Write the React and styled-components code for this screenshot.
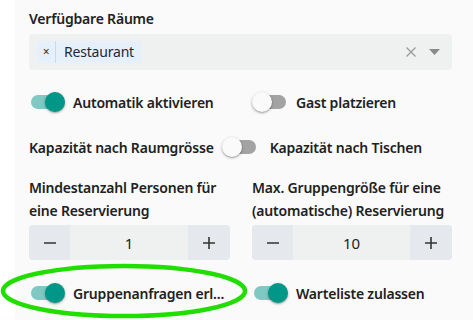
import styled, { createGlobalStyle } from "styled-components";

const Global = createGlobalStyle`
  html, body {
    margin: 0;
    padding: 0;
    background: #ffffff;
  }
  body {
    font-family: "Noto Sans", "Open Sans", sans-serif;
    color: #212121;
    letter-spacing: -0.2px;
  }
`;

const Page = styled.div`
  position: relative;
  width: 473px;
  height: 320px;
  overflow: hidden;
  background: #ffffff;
`;

const Panel = styled.div`
  margin-left: 15px;
  height: 320px;
  background: #fafafa;
  padding: 8px 21px 0 14px;
  box-sizing: border-box;
  display: flex;
  flex-direction: column;
`;

const Label = styled.div`
  font-size: 14px;
  font-weight: 600;
  line-height: 22px;
  margin-bottom: 4px;
`;

const Select = styled.div`
  height: 36px;
  border-radius: 4px;
  background: #eff0f0;
  display: flex;
  align-items: center;
  padding: 0 12px 0 8px;
  box-sizing: border-box;
`;

const Chip = styled.div`
  display: flex;
  align-items: stretch;
  height: 22px;
  background: #e6f0fb;
  border-radius: 2px;
  font-size: 14px;
  line-height: 22px;
  color: #1f2a36;
`;

const ChipRemove = styled.span`
  width: 18px;
  text-align: center;
  font-size: 12px;
  color: #333;
  border-right: 1px solid #c4daf1;
`;

const ChipText = styled.span`
  padding: 0 7px 0 8px;
`;

const SelectIcons = styled.div`
  margin-left: auto;
  display: flex;
  align-items: center;
  gap: 12px;
`;

const Row = styled.div`
  display: grid;
  grid-template-columns: 201px 200px;
  column-gap: 22px;
  margin-top: ${(p) => p.$mt || 0}px;
`;

const ToggleLine = styled.div`
  height: 32px;
  display: flex;
  align-items: center;
  gap: 8px;
  margin-top: ${(p) => p.$mt || 0}px;
  font-size: 14px;
  font-weight: 600;
  white-space: nowrap;
`;

const After = styled.span`
  margin-left: 4px;
`;

const SwitchBox = styled.span`
  position: relative;
  flex: none;
  width: 36px;
  height: 20px;
`;

const Track = styled.span`
  position: absolute;
  left: 2px;
  top: 3px;
  width: 32px;
  height: 14px;
  border-radius: 7px;
  background: ${(p) => (p.$on ? "#7fc9c2" : "#a3a3a3")};
`;

const Thumb = styled.span`
  position: absolute;
  top: 0;
  left: ${(p) => (p.$on ? 16 : 0)}px;
  width: 20px;
  height: 20px;
  border-radius: 50%;
  background: ${(p) => (p.$on ? "#009688" : "#fafafa")};
  box-shadow: 0 1px 3px rgba(0, 0, 0, 0.3), 0 1px 1px rgba(0, 0, 0, 0.14);
`;

const Switch = ({ on }) => (
  <SwitchBox>
    <Track $on={on} />
    <Thumb $on={on} />
  </SwitchBox>
);

const Field = styled.div`
  display: flex;
  flex-direction: column;
`;

const FieldLabel = styled.div`
  font-size: 14px;
  font-weight: 600;
  line-height: 23px;
  margin-bottom: 3px;
`;

const Stepper = styled.div`
  display: grid;
  grid-template-columns: 41px 1fr 42px;
  height: 35px;
  border-radius: 4px;
  overflow: hidden;
  background: #eff0f0;
`;

const StepBtn = styled.div`
  background: #e5e8ec;
  display: flex;
  align-items: center;
  justify-content: center;
`;

const StepValue = styled.div`
  display: flex;
  align-items: center;
  justify-content: center;
  font-size: 15px;
  color: #222;
`;

const Ring = styled.svg`
  position: absolute;
  left: 0;
  top: 262px;
`;

const Minus = () => (
  <svg width="14" height="14" viewBox="0 0 14 14">
    <path d="M1 7h12" stroke="#333" strokeWidth="1.6" />
  </svg>
);

const Plus = () => (
  <svg width="14" height="14" viewBox="0 0 14 14">
    <path d="M1 7h12M7 1v12" stroke="#333" strokeWidth="1.6" />
  </svg>
);

export default function App() {
  return (
    <Page>
      <Global />
      <Panel>
        <Label>Verfügbare Räume</Label>
        <Select>
          <Chip>
            <ChipRemove>×</ChipRemove>
            <ChipText>Restaurant</ChipText>
          </Chip>
          <SelectIcons>
            <svg width="12" height="12" viewBox="0 0 12 12">
              <path d="M1.5 1.5l9 9M10.5 1.5l-9 9" stroke="#9a9a9a" strokeWidth="1.3" />
            </svg>
            <svg width="11" height="6" viewBox="0 0 11 6">
              <path d="M0 0h11L5.5 6z" fill="#8a8a8a" />
            </svg>
          </SelectIcons>
        </Select>

        <Row $mt={16}>
          <ToggleLine>
            <Switch on />
            Automatik aktivieren
          </ToggleLine>
          <ToggleLine>
            <Switch />
            Gast platzieren
          </ToggleLine>
        </Row>

        <ToggleLine $mt={13}>
          Kapazität nach Raumgrösse
          <Switch />
          <After>Kapazität nach Tischen</After>
        </ToggleLine>

        <Row $mt={13}>
          <Field>
            <FieldLabel>
              Mindestanzahl Personen für
              <br />
              eine Reservierung
            </FieldLabel>
            <Stepper>
              <StepBtn>
                <Minus />
              </StepBtn>
              <StepValue>1</StepValue>
              <StepBtn>
                <Plus />
              </StepBtn>
            </Stepper>
          </Field>
          <Field>
            <FieldLabel>
              Max. Gruppengröße für eine
              <br />
              (automatische) Reservierung
            </FieldLabel>
            <Stepper>
              <StepBtn>
                <Minus />
              </StepBtn>
              <StepValue>10</StepValue>
              <StepBtn>
                <Plus />
              </StepBtn>
            </Stepper>
          </Field>
        </Row>

        <Row $mt={17}>
          <ToggleLine>
            <Switch on />
            Gruppenanfragen erl...
          </ToggleLine>
          <ToggleLine>
            <Switch on />
            Warteliste zulassen
          </ToggleLine>
        </Row>
      </Panel>
      <Ring width="250" height="58" viewBox="0 0 250 58">
        <ellipse cx="124" cy="29" rx="121" ry="25" fill="none" stroke="#22dd00" strokeWidth="4.5" />
      </Ring>
    </Page>
  );
}
